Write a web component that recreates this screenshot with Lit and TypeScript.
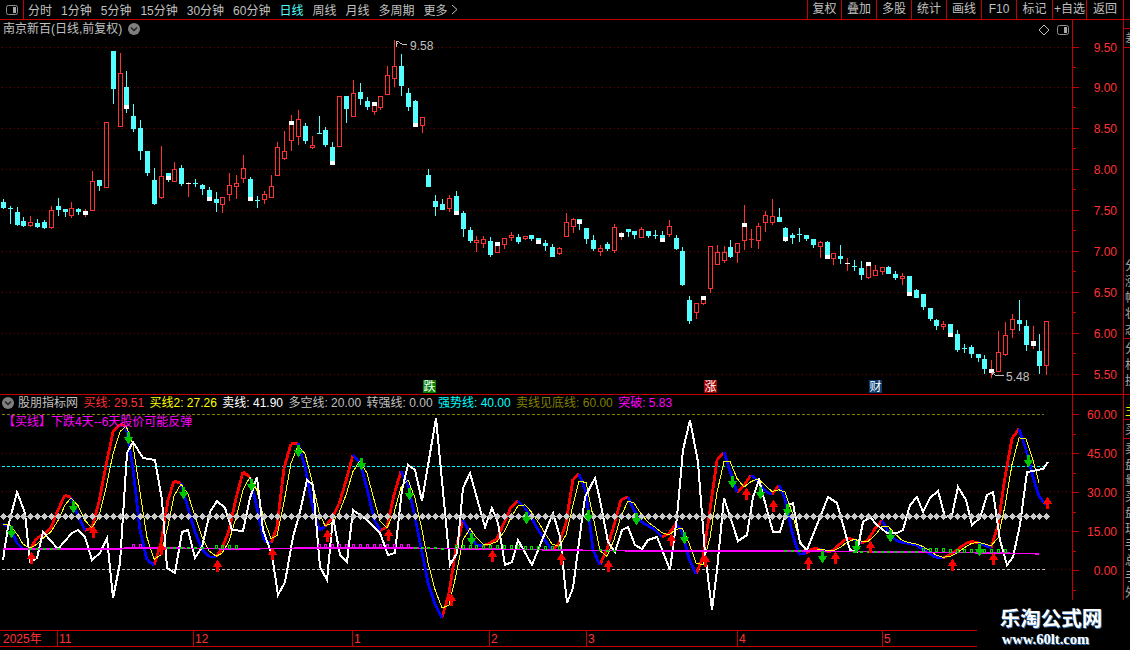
import { LitElement, css, html, svg } from 'lit'
import { customElement } from 'lit/decorators.js'

// top, bottom, wick high, wick low, kind (c cyan, r red, w white), white block from, white block to
type Candle = [number, number, number, number, string, number?, number?]

const candles: Candle[] = [
  [202, 208, 199, 209, 'c'], [208, 208, 206, 224, 'c'], [212, 225, 207, 226, 'c'], [221, 226, 217, 227, 'c'],
  [222, 226, 216, 227, 'r'], [223, 227, 219, 228, 'c'], [222, 228, 220, 229, 'c'], [210, 228, 206, 229, 'r'],
  [206, 210, 198, 216, 'c'], [209, 212, 209, 217, 'c'], [208, 216, 202, 218, 'r'], [209, 212, 208, 215, 'c'],
  [211, 215, 209, 217, 'w'], [181, 211, 171, 211, 'r'], [180, 186, 180, 191, 'c'], [122, 188, 122, 188, 'r'],
  [51, 89, 51, 104, 'c'], [73, 127, 53, 127, 'r'], [87, 109, 71, 113, 'c', 105, 109], [116, 129, 104, 132, 'c'],
  [128, 151, 120, 160, 'c'], [151, 173, 151, 176, 'c'], [180, 204, 168, 205, 'c'], [176, 198, 146, 199, 'r'],
  [173, 180, 173, 182, 'c', 176, 180], [169, 182, 162, 182, 'r'], [168, 184, 165, 186, 'c'], [183, 183, 182, 197, 'w'],
  [183, 183, 179, 187, 'c'], [185, 189, 184, 195, 'c'], [190, 201, 187, 201, 'c', 197, 201], [199, 203, 192, 212, 'c'],
  [197, 205, 197, 213, 'r'], [185, 195, 173, 201, 'r'], [183, 187, 175, 199, 'r'], [168, 179, 155, 183, 'r'],
  [179, 201, 177, 201, 'c', 197, 201], [200, 200, 196, 208, 'c'], [194, 200, 191, 204, 'r'], [186, 198, 175, 198, 'r'],
  [147, 176, 142, 176, 'r'], [151, 159, 131, 160, 'r'], [121, 141, 115, 151, 'r', 121, 125], [119, 137, 110, 145, 'r'],
  [126, 141, 123, 144, 'c'], [145, 148, 136, 149, 'r'], [133, 133, 116, 134, 'c'], [130, 145, 127, 147, 'c'],
  [147, 165, 142, 165, 'c', 161, 165], [96, 147, 96, 147, 'r'], [96, 109, 96, 123, 'c'], [93, 117, 80, 117, 'r'],
  [92, 99, 83, 105, 'c'], [101, 107, 97, 110, 'c'], [102, 112, 102, 115, 'r', 102, 106], [96, 108, 96, 110, 'r'],
  [75, 95, 66, 95, 'r'], [66, 79, 40, 87, 'r'], [66, 86, 54, 96, 'c'], [93, 107, 88, 111, 'c'],
  [101, 127, 100, 127, 'c', 123, 127], [117, 126, 117, 133, 'r'], [175, 187, 169, 187, 'c'], [201, 207, 195, 216, 'c'],
  [204, 210, 199, 210, 'c'], [198, 209, 195, 212, 'r'], [196, 215, 191, 215, 'c', 211, 215], [213, 229, 211, 237, 'c'],
  [230, 241, 227, 243, 'c'], [240, 243, 236, 252, 'r'], [239, 244, 236, 248, 'r'], [241, 255, 237, 257, 'c'],
  [242, 253, 242, 253, 'r', 242, 246], [238, 245, 238, 249, 'r'], [235, 238, 232, 241, 'r'], [237, 242, 234, 244, 'c'],
  [236, 239, 236, 240, 'r'], [235, 239, 235, 241, 'c'], [238, 244, 238, 244, 'c', 240, 244], [243, 246, 240, 251, 'c'],
  [247, 257, 244, 257, 'c'], [248, 254, 247, 255, 'r'], [222, 237, 213, 237, 'r'], [219, 227, 218, 233, 'r'],
  [219, 224, 219, 230, 'c', 220, 224], [228, 239, 228, 244, 'c'], [240, 249, 235, 251, 'c'], [248, 252, 245, 256, 'r'],
  [244, 249, 242, 251, 'c'], [227, 251, 224, 253, 'r'], [233, 237, 232, 240, 'w'], [229, 232, 229, 237, 'c'],
  [231, 235, 231, 239, 'c'], [229, 238, 227, 238, 'r'], [231, 236, 231, 238, 'c'], [235, 235, 230, 239, 'c'],
  [235, 242, 231, 242, 'c', 238, 242], [226, 235, 220, 237, 'r'], [238, 249, 235, 250, 'c'], [251, 285, 247, 286, 'c'],
  [300, 321, 296, 324, 'c'], [303, 313, 303, 319, 'r'], [296, 304, 296, 305, 'r', 296, 300], [246, 289, 246, 293, 'r'],
  [252, 265, 245, 265, 'r'], [252, 261, 246, 263, 'r'], [247, 257, 240, 258, 'c'], [243, 253, 243, 263, 'r'],
  [223, 241, 205, 250, 'r', 223, 227], [239, 239, 229, 248, 'r'], [226, 241, 223, 249, 'r'], [215, 223, 211, 232, 'r'],
  [216, 223, 199, 225, 'r'], [217, 222, 208, 222, 'c'], [228, 241, 227, 242, 'c', 237, 241], [235, 238, 233, 244, 'c'],
  [234, 234, 228, 242, 'c'], [235, 239, 235, 241, 'c'], [239, 245, 239, 248, 'c'], [242, 247, 241, 258, 'r'],
  [242, 259, 241, 259, 'c', 255, 259], [253, 259, 253, 265, 'r'], [256, 259, 245, 264, 'c'], [263, 263, 258, 271, 'w'],
  [266, 266, 260, 271, 'c'], [268, 275, 261, 280, 'c'], [262, 278, 262, 279, 'r', 262, 266], [270, 276, 265, 276, 'r'],
  [267, 272, 267, 275, 'r'], [267, 274, 266, 274, 'c'], [274, 278, 271, 280, 'c'], [276, 279, 273, 285, 'r'],
  [276, 296, 276, 296, 'c', 292, 296], [290, 298, 289, 298, 'c'], [294, 307, 294, 310, 'c'], [308, 319, 308, 321, 'c'],
  [320, 326, 319, 330, 'c'], [324, 327, 321, 330, 'r'], [324, 337, 324, 337, 'c', 333, 337], [334, 350, 330, 352, 'c'],
  [348, 348, 344, 353, 'c'], [347, 354, 345, 358, 'c'], [354, 358, 354, 362, 'c'], [359, 369, 355, 374, 'c'],
  [369, 373, 360, 378, 'w'], [352, 372, 331, 372, 'r'], [335, 355, 322, 356, 'r'], [319, 330, 314, 338, 'r'],
  [320, 324, 300, 331, 'c'], [326, 345, 320, 351, 'c'], [341, 346, 326, 349, 'w'], [351, 366, 334, 374, 'c'],
  [321, 366, 321, 375, 'r'],
]

const colX = (i: number) => Math.floor(3.3 + 6.865 * i)

const buyKeys: number[][] = [
  [3, 524], [10, 527], [17, 543], [25, 551], [30, 549], [37, 538], [43, 535], [52, 527], [58, 510], [65, 495], [72, 498],
  [80, 522], [86, 532], [92, 528], [98, 507], [107, 460], [113, 432], [120, 424], [125, 423], [129, 436], [132, 460],
  [140, 530], [147, 560], [154, 565], [162, 540], [168, 500], [175, 478], [183, 485], [190, 517], [200, 547], [210, 558],
  [217, 557], [227, 540], [235, 502], [243, 472], [250, 477], [257, 508], [265, 545], [270, 546], [277, 527], [285, 460],
  [292, 441], [298, 443], [300, 450], [307, 473], [313, 510], [320, 533], [333, 517], [342, 498], [352, 455], [358, 455],
  [365, 480], [375, 523], [383, 535], [388, 525], [395, 490], [402, 468], [408, 485], [415, 517], [428, 583], [437, 610],
  [443, 619], [448, 600], [453, 567], [458, 535], [463, 520], [470, 533], [477, 547], [487, 545], [498, 538], [510, 508],
  [518, 501], [527, 510], [540, 533], [555, 555], [567, 520], [573, 479], [580, 473], [587, 495], [593, 550], [600, 565],
  [610, 542], [620, 500], [628, 497], [635, 512], [642, 523], [653, 528], [663, 538], [670, 533], [677, 522], [683, 533],
  [690, 563], [697, 576], [703, 557], [710, 510], [718, 453], [724, 452], [732, 477], [738, 495], [753, 472], [760, 485],
  [770, 497], [779, 485], [787, 503], [793, 538], [800, 557], [808, 552], [815, 547], [827, 552], [835, 550], [845, 538],
  [857, 540], [863, 545], [870, 538], [877, 525], [883, 520], [890, 535], [897, 542], [907, 543], [917, 545], [927, 552],
  [937, 558], [945, 558], [957, 550], [967, 542], [975, 541], [983, 545], [992, 548], [997, 533], [1005, 477], [1013, 433],
  [1020, 428], [1027, 453], [1035, 485], [1042, 505],
]

const whiteLine: number[][] = [
  [3, 560], [8, 527], [17, 492], [25, 513], [30, 562], [37, 558], [43, 532], [58, 549], [72, 533], [78, 530], [85, 537],
  [92, 560], [100, 553], [107, 538], [113, 598], [120, 563], [127, 453], [133, 442], [143, 458], [155, 460], [162, 500],
  [167, 568], [175, 573], [182, 532], [188, 530], [195, 558], [202, 547], [210, 512], [217, 501], [225, 508], [232, 530],
  [243, 531], [250, 498], [257, 477], [263, 530], [272, 555], [278, 595], [285, 582], [293, 537], [300, 512], [307, 480],
  [313, 485], [320, 567], [327, 580], [333, 517], [340, 555], [347, 562], [353, 510], [367, 520], [380, 533], [388, 555],
  [395, 553], [402, 490], [408, 465], [415, 470], [422, 501], [436, 418], [450, 565], [457, 553], [463, 488], [470, 473],
  [485, 527], [492, 508], [498, 523], [505, 565], [512, 562], [518, 540], [532, 565], [553, 513], [560, 537], [567, 603],
  [573, 588], [585, 497], [595, 478], [600, 500], [608, 542], [615, 552], [622, 530], [628, 527], [635, 545], [642, 549],
  [648, 540], [657, 537], [663, 552], [670, 570], [677, 517], [683, 450], [690, 420], [698, 462], [705, 553], [712, 610],
  [717, 570], [724, 498], [738, 541], [747, 535], [753, 497], [759, 480], [773, 532], [780, 532], [788, 505], [793, 503],
  [800, 543], [807, 550], [828, 497], [837, 503], [850, 550], [857, 552], [863, 522], [870, 517], [877, 525], [887, 533],
  [897, 533], [903, 530], [910, 505], [917, 497], [923, 512], [930, 498], [938, 491], [945, 517], [952, 515], [958, 487],
  [966, 500], [972, 525], [980, 518], [987, 495], [993, 492], [1000, 540], [1007, 565], [1013, 557], [1020, 525], [1027, 472],
  [1043, 469], [1048, 462],
]

const magentaKeys: number[][] = [
  [2, 549], [120, 549], [125, 548], [165, 548], [240, 549], [310, 548], [400, 548], [480, 549], [560, 550], [650, 551],
  [800, 551], [900, 552], [1000, 553], [1045, 554],
]

const redArrows: number[][] = [
  [31, 552], [93, 526], [161, 543], [217, 560], [272, 548], [327, 530], [388, 529], [451, 594], [492, 550], [561, 553],
  [608, 560], [671, 534], [705, 555], [746, 488], [773, 500], [808, 557], [835, 552], [870, 541], [952, 559], [993, 553],
  [1047, 497],
]

const greenArrows: number[][] = [
  [11, 538], [73, 513], [128, 444], [183, 499], [251, 491], [298, 457], [361, 470], [409, 500], [471, 545], [526, 524],
  [588, 522], [636, 525], [684, 544], [732, 488], [760, 499], [787, 516], [822, 563], [856, 553], [890, 542], [979, 556],
  [1028, 467],
]

const filledDots = [[30, 58], [157, 205], [415, 443], [600, 620], [785, 800], [848, 916]]
const hollowGreen = [[216, 236], [450, 560], [917, 1005]]
const hollowMagenta = [[127, 140], [318, 408]]

const interp = (keys: number[][], x: number) => {
  if (x <= keys[0][0]) return keys[0][1]
  for (let k = 1; k < keys.length; k++) {
    if (x <= keys[k][0]) {
      const [x0, y0] = keys[k - 1]
      const [x1, y1] = keys[k]
      return y0 + ((y1 - y0) * (x - x0)) / (x1 - x0)
    }
  }
  return keys[keys.length - 1][1]
}

const inRange = (ranges: number[][], x: number) => ranges.some(([a, b]) => x >= a && x <= b)

const tabs = ['分时', '1分钟', '5分钟', '15分钟', '30分钟', '60分钟', '日线', '周线', '月线', '多周期']
const tools = ['复权', '叠加', '多股', '统计', '画线', 'F10', '标记', '+自选', '返回']
const stats = [
  ['买线', ': 29.51', 'red'],
  ['买线2', ': 27.26', 'yellow'],
  ['卖线', ': 41.90', 'white'],
  ['多空线', ': 20.00', 'gray'],
  ['转强线', ': 0.00', 'gray'],
  ['强势线', ': 40.00', 'cyan'],
  ['卖线见底线', ': 60.00', 'olive'],
  ['突破', ': 5.83', 'magenta'],
]
const priceTicks: [number, string][] = [[47, '9.50'], [87, '9.00'], [128, '8.50'], [169, '8.00'], [210, '7.50'], [251, '7.00'], [292, '6.50'], [333, '6.00'], [374, '5.50']]
const indTicks: [number, string][] = [[414, '60.00'], [453, '45.00'], [492, '30.00'], [531, '15.00'], [570, '0.00']]
const months: [number, number, string][] = [[57, 58, '11'], [193, 194, '12'], [352, 353, '1'], [489, 490, '2'], [586, 587, '3'], [737, 738, '4'], [882, 883, '5']]
const badges: [number, string, string][] = [[423, '跌', 'b-green'], [704, '涨', 'b-red'], [869, '财', 'b-blue']]

const panelIcon = svg`<rect class="ico" x="0.5" y="0.5" width="11" height="9" rx="2"></rect><rect class="ico-fill" x="7" y="2" width="3" height="6"></rect>`

@customElement('app-root')
export class AppRoot extends LitElement {
  static styles = css`
    :host {
      display: block;
      position: relative;
      width: 1130px;
      height: 650px;
      background: #000;
      overflow: hidden;
      color: #c0c0c0;
      font: 12px 'Liberation Sans', 'Noto Sans CJK SC', sans-serif;
      --line: #c40000;
    }
    svg {
      display: block;
      flex: none;
    }
    .toolbar {
      display: flex;
      align-items: center;
      height: 19px;
      border-bottom: 1px solid var(--line);
    }
    .home {
      width: 23px;
      height: 19px;
      border-right: 1px solid var(--line);
      display: flex;
      align-items: center;
      justify-content: center;
      box-sizing: content-box;
    }
    .tabs {
      display: flex;
      gap: 9px;
      margin-left: 4px;
    }
    .active {
      color: #54ffff;
    }
    .more {
      margin-left: -6px;
    }
    .tools {
      margin-left: auto;
      margin-right: 6px;
      display: grid;
      grid-template-columns: 34px 35px 35px 35px 35px 35px 36px 34px 37px;
      height: 19px;
      border-right: 1px solid var(--line);
    }
    .tools span {
      border-left: 1px solid var(--line);
      text-align: center;
      line-height: 18px;
      white-space: nowrap;
    }
    .pane {
      display: flex;
      position: relative;
    }
    .main {
      height: 374px;
      border-bottom: 1px solid var(--line);
    }
    .ind {
      height: 235px;
    }
    .axis {
      border-left: 1px solid var(--line);
      width: 50px;
      flex: none;
    }
    .rail {
      flex: 1;
      border-left: 1px solid var(--line);
      overflow: hidden;
      line-height: 16px;
      white-space: nowrap;
      color: #a8a8a8;
    }
    .rail div {
      margin-left: 1px;
    }
    .rail .sep {
      margin-left: 0;
      border-top: 1px solid var(--line);
      height: 2px;
    }
    .rail .skip {
      height: 208px;
    }
    .rail .nudge {
      height: 8px;
    }
    .head {
      position: absolute;
      top: 2px;
      left: 3px;
      display: flex;
      align-items: center;
      gap: 5.4px;
      white-space: nowrap;
      line-height: 14px;
    }
    .ind .head {
      top: 1px;
      left: 2px;
    }
    .ind .head svg {
      margin-right: -1.4px;
    }
    .note {
      position: absolute;
      left: 3px;
      top: 20px;
      line-height: 14px;
      color: #ff00ff;
    }
    .red {
      color: #ff3232;
    }
    .yellow {
      color: #ffff00;
    }
    .white {
      color: #fff;
    }
    .gray {
      color: #c0c0c0;
    }
    .cyan {
      color: #00ffff;
    }
    .olive {
      color: #808000;
    }
    .magenta {
      color: #ff00ff;
    }
    .glyphs {
      position: absolute;
      top: 4px;
      left: 1038px;
      display: flex;
      gap: 7px;
      align-items: center;
    }
    .timebar {
      height: 15px;
      border-top: 1px solid var(--line);
      border-bottom: 1px solid var(--line);
    }
    .mark {
      position: absolute;
      right: 0;
      bottom: 0;
      width: 153px;
      height: 50px;
      background: #000;
      color: #fff;
      text-align: center;
    }
    .mark b {
      display: block;
      margin: 7px 0 0 -5px;
      font-size: 20.5px;
      line-height: 24px;
      text-shadow: 1px 1px 0 #2f6fb0;
    }
    .mark i {
      display: block;
      margin-left: -16px;
      font: bold 14.6px 'Liberation Serif', serif;
      line-height: 16px;
      text-shadow: 1px 1px 0 #2f6fb0;
    }

    /* chart parts */
    .crisp {
      shape-rendering: crispEdges;
    }
    .grid {
      stroke: #700000;
      stroke-width: 1;
      stroke-dasharray: 1 3;
    }
    .cy {
      fill: #54ffff;
    }
    .re {
      fill: #ff3232;
    }
    .wh {
      fill: #fff;
    }
    .hollow {
      fill: none;
      stroke: #ff3232;
      stroke-width: 1;
    }
    .tick {
      stroke: var(--line);
      stroke-width: 1;
    }
    .lab {
      fill: #ff3232;
      font-size: 12px;
      text-anchor: end;
    }
    .mon {
      fill: #ff3232;
      font-size: 12px;
    }
    .tag {
      fill: #c0c0c0;
      font-size: 12px;
    }
    .flag {
      fill: none;
      stroke: #c0c0c0;
      stroke-width: 1;
    }
    .badge {
      fill: #fff;
      font-size: 12px;
      text-anchor: middle;
    }
    .b-green {
      fill: #008000;
    }
    .b-red {
      fill: #a00000;
    }
    .b-blue {
      fill: #0a3d70;
    }
    .ico {
      fill: none;
      stroke: #909090;
    }
    .ico-fill {
      fill: #a8a8a8;
    }
    .hl {
      stroke-width: 1;
      stroke-dasharray: 3 2;
    }
    .hl-olive {
      stroke: #808000;
    }
    .hl-cyan {
      stroke: #00ffff;
    }
    .hl-gray {
      stroke: #c0c0c0;
    }
    .ln {
      fill: none;
    }
    .ln-red {
      stroke: #ff0000;
      stroke-width: 2.8;
    }
    .ln-blue {
      stroke: #0000ff;
      stroke-width: 2.8;
    }
    .ln-yellow {
      stroke: #ffff00;
      stroke-width: 1;
    }
    .ln-white {
      stroke: #fff;
      stroke-width: 2;
    }
    .ln-magenta {
      stroke: #ff00ff;
      stroke-width: 1.5;
    }
    .dia {
      fill: #c8c8c8;
    }
    .dot {
      fill: #00e000;
    }
    .sq-green {
      fill: none;
      stroke: #00e000;
    }
    .sq-magenta {
      fill: none;
      stroke: #ff00ff;
    }
    .ar-red {
      fill: #ff0000;
    }
    .ar-green {
      fill: #00c800;
    }
    .chev {
      fill: none;
      stroke: #1c1c1c;
      stroke-width: 1.3;
    }
    .chev-bg {
      fill: #7f7f7f;
    }
    .arrow-more {
      fill: none;
      stroke: #c0c0c0;
    }
  `

  private candle(c: Candle, i: number) {
    const [t, b, h, l, kind, w0, w1] = c
    const x = colX(i)
    const cls = kind === 'c' ? 'cy' : kind === 'r' ? 're' : 'wh'
    const wick = kind === 'w' ? 're' : cls
    const parts = []
    if (h < t) parts.push(svg`<rect class=${wick} x=${x} y=${h} width="1" height=${t - h}></rect>`)
    if (l > b) parts.push(svg`<rect class=${wick} x=${x} y=${b} width="1" height=${l - b}></rect>`)
    if (t === b) parts.push(svg`<rect class=${cls} x=${x - 2} y=${t} width="5" height="1"></rect>`)
    else if (kind === 'r') parts.push(svg`<rect class="hollow" x=${x - 1.5} y=${t + 0.5} width="4" height=${b - t - 1}></rect>`)
    else parts.push(svg`<rect class=${cls} x=${x - 2} y=${t} width="5" height=${b - t}></rect>`)
    if (w0 !== undefined && w1 !== undefined) parts.push(svg`<rect class="wh" x=${x - 2} y=${w0} width="5" height=${w1 - w0}></rect>`)
    return parts
  }

  private mainChart() {
    return html`<svg class="crisp" width="1072" height="374" viewBox="0 20 1072 374">
      ${priceTicks.map(([y]) => svg`<line class="grid" x1="2" x2="1072" y1=${y + 0.5} y2=${y + 0.5}></line>`)}
      ${candles.map((c, i) => this.candle(c, i))}
      <path class="flag" d="M396 41V47M396 41.5H399M396 43.5H398M399 42.5L403 44.5H407"></path>
      <text class="tag" x="410" y="50">9.58</text>
      <path class="flag" d="M992 372L996 376M992 372V375M992 372H995M995 375.5H1004"></path>
      <text class="tag" x="1006" y="381">5.48</text>
      ${badges.map(([x, t, cls]) => svg`<rect class=${cls} x=${x} y="380" width="13" height="13"></rect><text class="badge" x=${x + 6.5} y="391">${t}</text>`)}
    </svg>`
  }

  private indicatorChart() {
    const n = candles.length
    const xs = Array.from({ length: n }, (_, i) => colX(i))
    const buy = xs.map((x) => interp(buyKeys, x))
    const lagged = buy.map((y, i) => 0.45 * y + 0.45 * buy[Math.max(i - 1, 0)] + 0.1 * buy[Math.max(i - 2, 0)])
    let red = ''
    let blue = ''
    for (let i = 1; i < n; i++) {
      if (xs[i - 1] > 1042) break
      const seg = `M${xs[i - 1]} ${buy[i - 1].toFixed(1)}L${xs[i]} ${buy[i].toFixed(1)}`
      if (buy[i] <= lagged[i] + 0.5) red += seg
      else blue += seg
    }
    const points = (p: number[][]) => p.map(([x, y]) => `${x},${y.toFixed(1)}`).join(' ')
    const magenta = xs.filter((x) => x <= 1045)
    return html`<svg class="crisp" width="1072" height="235" viewBox="0 395 1072 235">
      ${[453, 491, 530].map((y) => svg`<line class="grid" x1="2" x2="1072" y1=${y + 0.5} y2=${y + 0.5}></line>`)}
      <line class="grid" x1="1045" x2="1072" y1="569.5" y2="569.5"></line>
      <line class="hl hl-olive" x1="2" x2="1044" y1="414.5" y2="414.5"></line>
      <line class="hl hl-cyan" x1="2" x2="1044" y1="466.5" y2="466.5"></line>
      <line class="hl hl-gray" x1="2" x2="1045" y1="569.5" y2="569.5"></line>
      <path class="ln ln-red" d=${red}></path>
      <path class="ln ln-blue" d=${blue}></path>
      <polyline class="ln ln-yellow" points=${points(xs.slice(0, n - 1).map((x, i) => [x, lagged[i]]))}></polyline>
      <polyline class="ln ln-white" points=${points(whiteLine)}></polyline>
      ${xs.map((x) => svg`<path class="dia" d="M${x + 0.5} 513L${x + 4} 516.5L${x + 0.5} 520L${x - 3} 516.5Z"></path>`)}
      <polyline class="ln ln-magenta" points=${points(magenta.map((x) => [x, interp(magentaKeys, x)]))}></polyline>
      ${magenta.map((x) => {
        const y = Math.round(interp(magentaKeys, x))
        if (inRange(filledDots, x)) return svg`<rect class="dot" x=${x - 1} y=${y - 1} width="3" height="2"></rect>`
        if (inRange(hollowGreen, x)) return svg`<rect class="sq-green" x=${x - 0.5} y=${y - 3.5} width="2" height="3"></rect>`
        if (inRange(hollowMagenta, x)) return svg`<rect class="sq-magenta" x=${x - 0.5} y=${y - 3.5} width="2" height="3"></rect>`
        return null
      })}
      ${redArrows.map(([x, y]) => svg`<path class="ar-red" d="M${x + 0.5} ${y}L${x + 5.5} ${y + 7}H${x + 2}V${y + 12}H${x - 1}V${y + 7}H${x - 4.5}Z"></path>`)}
      ${greenArrows.map(([x, y]) => svg`<path class="ar-green" d="M${x + 0.5} ${y}L${x + 5.5} ${y - 7}H${x + 2}V${y - 12}H${x - 1}V${y - 7}H${x - 4.5}Z"></path>`)}
    </svg>`
  }

  private axis(ticks: [number, string][], top: number, height: number) {
    const step = (ticks[1][0] - ticks[0][0]) / 2
    return html`<svg class="crisp axis" height=${height} viewBox="1073 ${top} 50 ${height}">
      ${ticks.map(([y, t]) => svg`
        <line class="tick" x1="1073" x2="1079" y1=${y + 0.5} y2=${y + 0.5}></line>
        <line class="tick" x1="1073" x2="1076" y1=${Math.round(y + step) + 0.5} y2=${Math.round(y + step) + 0.5}></line>
        <text class="lab" x="1117" y=${y + 5}>${t}</text>`)}
    </svg>`
  }

  private chevron() {
    return html`<svg width="12" height="12" viewBox="0 0 12 12">
      <circle class="chev-bg" cx="6" cy="6" r="6"></circle>
      <path class="chev" d="M3 4.5L6 7.5L9 4.5"></path>
    </svg>`
  }

  render() {
    return html`
      <div class="toolbar">
        <div class="home"><svg width="12" height="10" viewBox="0 0 12 10">${panelIcon}</svg></div>
        <div class="tabs">
          ${tabs.map((t) => html`<span class=${t === '日线' ? 'active' : ''}>${t}</span>`)}
          <span>更多</span>
          <span class="more"><svg width="7" height="17" viewBox="0 0 7 17"><path class="arrow-more" d="M1 4L6 8.5L1 13"></path></svg></span>
        </div>
        <div class="tools">${tools.map((t) => html`<span>${t}</span>`)}</div>
      </div>

      <div class="pane main">
        ${this.mainChart()}
        ${this.axis(priceTicks, 20, 374)}
        <div class="rail">
          <div class="nudge"></div>
          <div class="sep"></div>
          <div>差</div><div class="sep"></div>
          <div class="skip"></div>
          <div>分</div><div>涨</div><div>幅</div><div>状</div><div>态</div><div class="sep"></div>
          <div>分</div><div>析</div><div>换</div>
        </div>
        <div class="head">南京新百(日线,前复权)${this.chevron()}</div>
        <div class="glyphs">
          <svg width="12" height="12" viewBox="0 0 12 12"><path class="flag" d="M6 1L11 6L6 11L1 6Z"></path></svg>
          <svg width="12" height="10" viewBox="0 0 12 10">${panelIcon}</svg>
        </div>
      </div>

      <div class="pane ind">
        ${this.indicatorChart()}
        ${this.axis(indTicks, 395, 235)}
        <div class="rail">
          <div class="nudge"></div>
          <div class="yellow">主</div><div class="sep"></div>
          <div>买</div><div class="sep"></div>
          <div>卖</div><div>盘</div><div>量</div><div>买</div><div>盘</div><div>现</div>
          <div>手</div><div>总</div><div>手</div><div>外</div><div>盘</div>
        </div>
        <div class="head">
          ${this.chevron()}
          <span>股朋指标网</span>
          ${stats.map(([name, val, cls]) => html`<span class=${cls}>${name}${val}</span>`)}
        </div>
        <div class="note">【买线】下跌4天--6天股价可能反弹</div>
      </div>

      <div class="timebar">
        <svg class="crisp" width="1130" height="15" viewBox="0 631 1130 15">
          <text class="mon" x="3" y="643">2025年</text>
          ${months.map(([tx, lx, t]) => svg`<line class="tick" x1=${tx + 0.5} x2=${tx + 0.5} y1="631" y2="646"></line><text class="mon" x=${lx + 1} y="643">${t}</text>`)}
        </svg>
      </div>

      <div class="mark">
        <b>乐淘公式网</b>
        <i>www.60lt.com</i>
      </div>
    `
  }
}
